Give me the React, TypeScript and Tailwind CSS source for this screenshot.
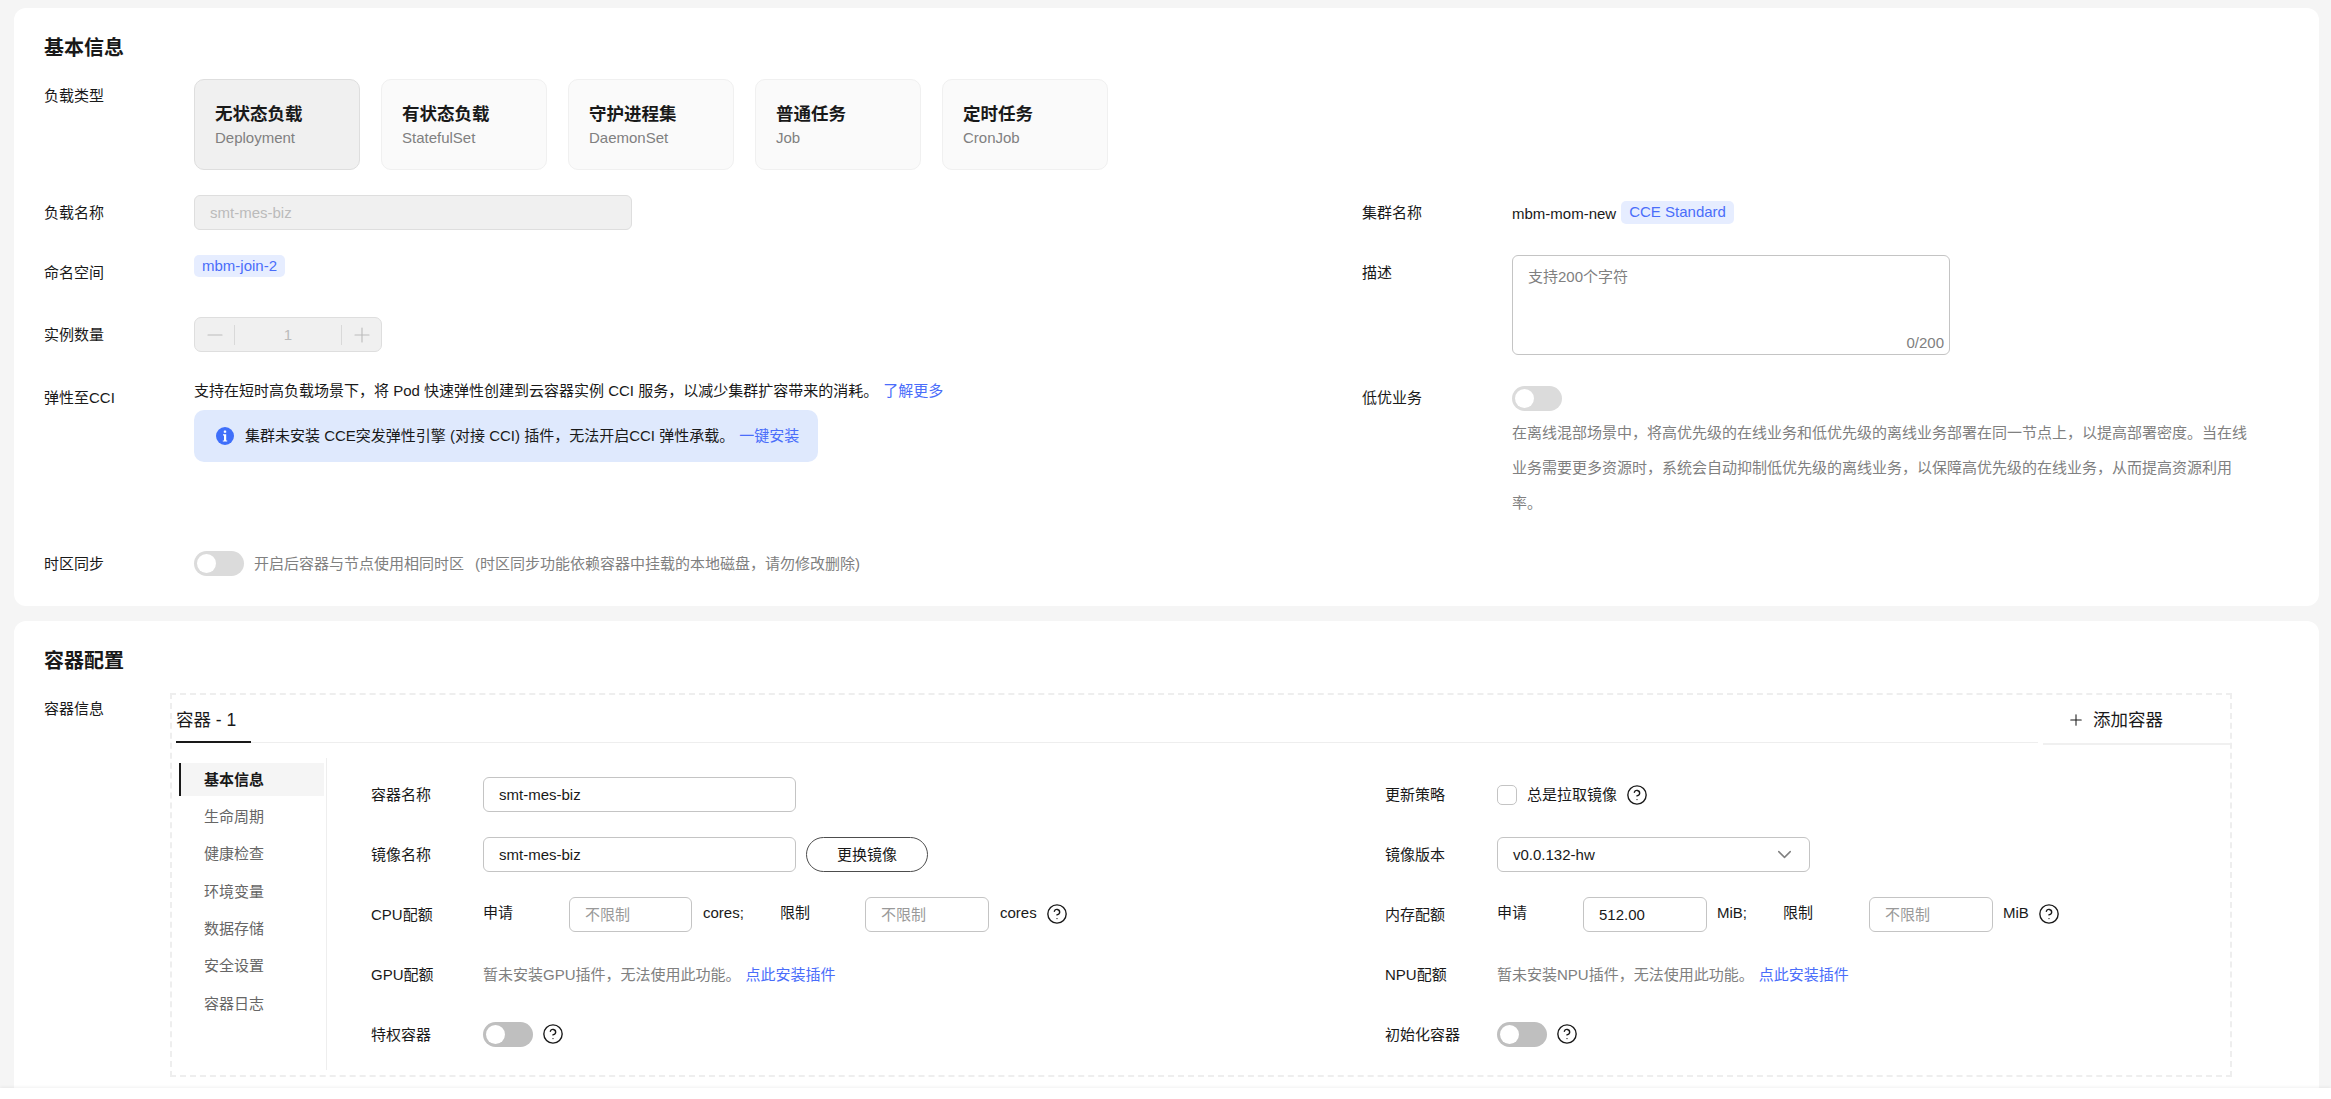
import { ChevronDown, CircleHelp, Minus, Plus } from "lucide-react";

const workloads = [
  { name: "无状态负载", sub: "Deployment", active: true },
  { name: "有状态负载", sub: "StatefulSet" },
  { name: "守护进程集", sub: "DaemonSet" },
  { name: "普通任务", sub: "Job" },
  { name: "定时任务", sub: "CronJob" },
];

const navItems = ["生命周期", "健康检查", "环境变量", "数据存储", "安全设置", "容器日志"];

function Toggle({ dark }: { dark?: boolean }) {
  return (
    <span className={`flex h-[25px] w-[50px] shrink-0 items-center rounded-full pl-[3px] ${dark ? "bg-[#bfbfbf]" : "bg-[#dbdbdb]"}`}>
      <span className="h-[19px] w-[19px] rounded-full bg-white" />
    </span>
  );
}

function Help({ className }: { className?: string }) {
  return <CircleHelp size={22} strokeWidth={1.5} className={`shrink-0 text-[#191919] ${className ?? ""}`} />;
}

function Field({ value, placeholder, className }: { value?: string; placeholder?: string; className: string }) {
  return (
    <input
      readOnly
      value={value}
      placeholder={placeholder}
      className={`h-[35px] shrink-0 rounded-[6px] border border-[#c4c4c4] bg-white px-[15px] text-[15px] text-[#191919] outline-none placeholder:text-[#999999] ${className}`}
    />
  );
}

export default function App() {
  return (
    <div
      className="flex h-[1099px] flex-col overflow-hidden bg-[#f5f5f5] text-[15px] leading-[20px] text-[#191919]"
      style={{ fontFamily: '"Liberation Sans", "Noto Sans CJK SC", sans-serif' }}
    >
      {/* 基本信息 */}
      <section className="ml-[14px] mr-[12px] mt-[8px] h-[598px] shrink-0 rounded-[12px] bg-white pl-[30px] pt-[26px]">
        <h2 className="text-[20px] font-bold leading-[28px]">基本信息</h2>

        <div className="mt-[17px] flex">
          <div className="w-[150px] pt-[7px]">负载类型</div>
          <div className="flex gap-[21px]">
            {workloads.map((w) => (
              <div
                key={w.name}
                className={`h-[91px] w-[166px] rounded-[10px] border pl-[20px] pt-[22px] ${
                  w.active ? "border-[#dedede] bg-[#f0f0f0]" : "border-[#f0f0f0] bg-[#fafafa]"
                }`}
              >
                <div className="text-[17.5px] font-bold leading-[24px]">{w.name}</div>
                <div className="mt-[2px] text-[#808080]">{w.sub}</div>
              </div>
            ))}
          </div>
        </div>

        <div className="mt-[25px] flex">
          {/* left column */}
          <div className="w-[1318px] shrink-0">
            <div className="flex h-[60px]">
              <div className="w-[150px] pt-[8px]">负载名称</div>
              <div className="flex h-[35px] w-[438px] items-center rounded-[6px] border border-[#dedede] bg-[#f0f0f0] pl-[15px] text-[#bbbbbb]">
                smt-mes-biz
              </div>
            </div>
            <div className="flex h-[62px]">
              <div className="w-[150px] pt-[8px]">命名空间</div>
              <span className="h-[22px] rounded-[5px] bg-[#e6edff] px-[8px] leading-[21px] text-[#4a6dfa]">mbm-join-2</span>
            </div>
            <div className="flex">
              <div className="w-[150px] pt-[8px]">实例数量</div>
              <div className="flex h-[35px] w-[188px] items-center rounded-[7px] border border-[#dedede] bg-[#f0f0f0] text-[#bbbbbb]">
                <span className="flex w-[39px] justify-center"><Minus size={24} strokeWidth={1.1} /></span>
                <span className="h-[20px] w-px bg-[#d9d9d9]" />
                <span className="flex-1 text-center">1</span>
                <span className="h-[20px] w-px bg-[#d9d9d9]" />
                <span className="flex w-[39px] justify-center"><Plus size={24} strokeWidth={1.1} /></span>
              </div>
            </div>
            <div className="mt-[29px] flex">
              <div className="w-[150px] pt-[7px]">弹性至CCI</div>
              <div>
                <div>
                  支持在短时高负载场景下，将 Pod 快速弹性创建到云容器实例 CCI 服务，以减少集群扩容带来的消耗。
                  <a className="ml-[5px] text-[#4a6dfa]">了解更多</a>
                </div>
                <div className="mt-[9px] flex h-[52px] w-[624px] items-center rounded-[10px] bg-[#dfe9fd] pl-[22px]">
                  <svg width="18" height="18" viewBox="0 0 18 18" className="shrink-0">
                    <circle cx="9" cy="9" r="9" fill="#3f6ffa" />
                    <rect x="7.8" y="3.4" width="2.4" height="2.4" rx="0.6" fill="#fff" />
                    <path d="M7 7.2h3.2v6.2H11.2v1.2H6.8v-1.2h1.2V8.4H7z" fill="#fff" />
                  </svg>
                  <span className="ml-[11px] whitespace-nowrap">
                    集群未安装 CCE突发弹性引擎 (对接 CCI) 插件，无法开启CCI 弹性承载。
                    <a className="ml-[5px] text-[#4a6dfa]">一键安装</a>
                  </span>
                </div>
              </div>
            </div>
            <div className="mt-[89px] flex items-center">
              <div className="w-[150px]">时区同步</div>
              <Toggle />
              <span className="ml-[10px] text-[#808080]">
                开启后容器与节点使用相同时区
                <span className="ml-[11px]">(时区同步功能依赖容器中挂载的本地磁盘，请勿修改删除)</span>
              </span>
            </div>
          </div>

          {/* right column */}
          <div className="flex-1">
            <div className="flex h-[60px]">
              <div className="w-[150px] pt-[8px]">集群名称</div>
              <div className="mt-[6px] flex h-[23px] items-center">
                <span className="pt-[3px]">mbm-mom-new</span>
                <span className="ml-[5px] h-[23px] rounded-[5px] bg-[#e6edff] px-[8px] leading-[21px] text-[#4a6dfa]">CCE Standard</span>
              </div>
            </div>
            <div className="flex">
              <div className="w-[150px] pt-[8px]">描述</div>
              <div className="relative h-[100px] w-[438px] rounded-[6px] border border-[#c4c4c4] pl-[15px] pt-[11px] text-[#808080]">
                支持200个字符
                <span className="absolute bottom-[1px] right-[5px]">0/200</span>
              </div>
            </div>
            <div className="mt-[31px] flex">
              <div className="w-[150px] pt-[2px]">低优业务</div>
              <div>
                <Toggle />
                <p className="mt-[4px] w-[745px] leading-[35px] text-[#808080]">
                  在离线混部场景中，将高优先级的在线业务和低优先级的离线业务部署在同一节点上，以提高部署密度。当在线业务需要更多资源时，系统会自动抑制低优先级的离线业务，以保障高优先级的在线业务，从而提高资源利用率。
                </p>
              </div>
            </div>
          </div>
        </div>
      </section>

      {/* 容器配置 */}
      <section className="ml-[14px] mr-[12px] mt-[15px] flex-1 rounded-t-[12px] bg-white pl-[30px] pt-[26px]">
        <h2 className="text-[20px] font-bold leading-[28px]">容器配置</h2>
        <div className="mt-[18px] flex">
          <div className="w-[126px] pt-[6px]">容器信息</div>
          <div className="h-[384px] w-[2062px] border-2 border-dashed border-[#eeeeee]">
            <div className="flex h-[50px]">
              <div className="ml-[4px] h-[48px] flex-1 border-b border-[#eeeeee]">
                <div className="h-[48px] w-[75px] border-b-2 border-[#191919] pt-[13px] text-[17.5px] leading-[24px]">容器 - 1</div>
              </div>
              <div className="ml-[5px] flex w-[187px] items-start border-b-2 border-[#f0f0f0] pl-[24px] pt-[13px] text-[17.5px] leading-[24px]">
                <Plus size={18} strokeWidth={1.4} className="mt-[3px]" />
                <span className="ml-[8px]">添加容器</span>
              </div>
            </div>

            <div className="flex">
              <aside className="ml-[7px] mt-[13px] h-[312px] w-[148px] border-r border-[#eeeeee] pt-[5px]">
                <div className="flex h-[33px] w-[145px] items-center border-l-2 border-[#191919] bg-[#f5f5f5] pl-[23px] font-bold">基本信息</div>
                {navItems.map((n) => (
                  <div key={n} className="mt-[4.4px] flex h-[33px] items-center pl-[25px] text-[#666666]">{n}</div>
                ))}
              </aside>

              <div className="grid flex-1 grid-cols-[1014px_1fr] auto-rows-[35px] gap-y-[25px] pl-[44px] pt-[32px]">
                <div className="flex items-center">
                  <span className="w-[112px]">容器名称</span>
                  <Field value="smt-mes-biz" className="w-[313px]" />
                </div>
                <div className="flex items-center">
                  <span className="w-[112px]">更新策略</span>
                  <span className="h-[20px] w-[20px] rounded-[5px] border border-[#c4c4c4]" />
                  <span className="ml-[10px]">总是拉取镜像</span>
                  <Help className="ml-[9px]" />
                </div>

                <div className="flex items-center">
                  <span className="w-[112px]">镜像名称</span>
                  <Field value="smt-mes-biz" className="w-[313px]" />
                  <button className="ml-[10px] h-[35px] w-[122px] rounded-full border border-[#4d4d4d]">更换镜像</button>
                </div>
                <div className="flex items-center">
                  <span className="w-[112px]">镜像版本</span>
                  <div className="flex h-[35px] w-[313px] items-center justify-between rounded-[6px] border border-[#c4c4c4] pl-[15px] pr-[13px]">
                    v0.0.132-hw
                    <ChevronDown size={23} strokeWidth={1.5} className="text-[#808080]" />
                  </div>
                </div>

                <div className="flex items-center">
                  <span className="w-[112px]">CPU配额</span>
                  <span className="w-[86px] pb-[3px]">申请</span>
                  <Field placeholder="不限制" className="w-[123px]" />
                  <span className="ml-[11px] w-[77px] pb-[3px]">cores;</span>
                  <span className="w-[85px] pb-[3px]">限制</span>
                  <Field placeholder="不限制" className="w-[124px]" />
                  <span className="ml-[11px] pb-[3px]">cores</span>
                  <Help className="mb-[2px] ml-[9px]" />
                </div>
                <div className="flex items-center">
                  <span className="w-[112px]">内存配额</span>
                  <span className="w-[86px] pb-[3px]">申请</span>
                  <Field value="512.00" className="w-[124px]" />
                  <span className="ml-[10px] w-[66px] pb-[3px]">MiB;</span>
                  <span className="w-[86px] pb-[3px]">限制</span>
                  <Field placeholder="不限制" className="w-[124px]" />
                  <span className="ml-[10px] pb-[3px]">MiB</span>
                  <Help className="mb-[2px] ml-[9px]" />
                </div>

                <div className="flex items-center">
                  <span className="w-[112px]">GPU配额</span>
                  <span className="text-[#808080]">暂未安装GPU插件，无法使用此功能。</span>
                  <a className="ml-[5px] text-[#4a6dfa]">点此安装插件</a>
                </div>
                <div className="flex items-center">
                  <span className="w-[112px]">NPU配额</span>
                  <span className="text-[#808080]">暂未安装NPU插件，无法使用此功能。</span>
                  <a className="ml-[5px] text-[#4a6dfa]">点此安装插件</a>
                </div>

                <div className="flex items-center">
                  <span className="w-[112px]">特权容器</span>
                  <Toggle dark />
                  <Help className="mb-[2px] ml-[9px]" />
                </div>
                <div className="flex items-center">
                  <span className="w-[112px]">初始化容器</span>
                  <Toggle dark />
                  <Help className="mb-[2px] ml-[9px]" />
                </div>
              </div>
            </div>
          </div>
        </div>
      </section>

      <div className="h-[11px] shrink-0 bg-white shadow-[0_-1px_3px_rgba(0,0,0,0.06)]" />
    </div>
  );
}
